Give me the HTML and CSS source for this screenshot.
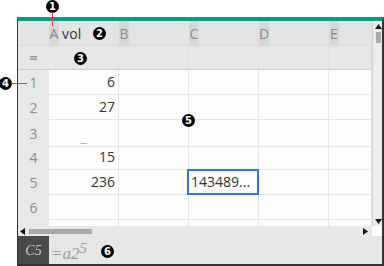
FILE: index.html
```html
<!DOCTYPE html>
<html>
<head>
<meta charset="utf-8">
<link rel="stylesheet" href="styles.css">
</head>
<body>
<div class="page">
  <div class="app">
    <div class="sheet">
      <div class="row head">
        <div class="rh"></div>
        <div class="cell"><span class="letter">A</span><span class="name">vol</span></div>
        <div class="cell"><span class="letter">B</span></div>
        <div class="cell"><span class="letter">C</span></div>
        <div class="cell"><span class="letter">D</span></div>
        <div class="cell"><span class="letter">E</span></div>
      </div>
      <div class="row formula">
        <div class="rh eq">=</div>
        <div class="cell"></div><div class="cell"></div><div class="cell"></div><div class="cell"></div><div class="cell"></div>
      </div>
      <div class="row data">
        <div class="rh">1</div>
        <div class="cell num">6</div><div class="cell"></div><div class="cell"></div><div class="cell"></div><div class="cell"></div>
      </div>
      <div class="row data">
        <div class="rh">2</div>
        <div class="cell num">27</div><div class="cell"></div><div class="cell"></div><div class="cell"></div><div class="cell"></div>
      </div>
      <div class="row data">
        <div class="rh">3</div>
        <div class="cell void">_</div><div class="cell"></div><div class="cell"></div><div class="cell"></div><div class="cell"></div>
      </div>
      <div class="row data">
        <div class="rh">4</div>
        <div class="cell num">15</div><div class="cell"></div><div class="cell"></div><div class="cell"></div><div class="cell"></div>
      </div>
      <div class="row data">
        <div class="rh">5</div>
        <div class="cell num">236</div><div class="cell"></div><div class="cell sel">143489...</div><div class="cell"></div><div class="cell"></div>
      </div>
      <div class="row data">
        <div class="rh">6</div>
        <div class="cell"></div><div class="cell"></div><div class="cell"></div><div class="cell"></div><div class="cell"></div>
      </div>
      <div class="row data">
        <div class="rh"></div>
        <div class="cell"></div><div class="cell"></div><div class="cell"></div><div class="cell"></div><div class="cell"></div>
      </div>
    </div>
    <div class="vscroll">
      <svg class="arr up" width="7" height="5" viewBox="0 0 7 5"><path d="M0 5 L3.5 0 L7 5 Z" fill="#111"/></svg>
      <div class="vthumb"></div>
      <div class="vspace"></div>
      <svg class="arr" width="7" height="5" viewBox="0 0 7 5"><path d="M0 0 L7 0 L3.5 5 Z" fill="#111"/></svg>
    </div>
    <div class="hscroll">
      <svg class="harr" width="5" height="7" viewBox="0 0 5 7"><path d="M5 0 L5 7 L0 3.5 Z" fill="#111"/></svg>
      <div class="hthumb"></div>
      <div class="hspace"></div>
      <svg class="harr" width="5" height="7" viewBox="0 0 5 7"><path d="M0 0 L5 3.5 L0 7 Z" fill="#111"/></svg>
    </div>
    <div class="corner"></div>
    <div class="entry">
      <div class="ref">C5</div>
      <div class="expr">=a2<sup>5</sup></div>
    </div>
  </div>

  <span class="callout c1">1</span>
  <span class="callout c2">2</span>
  <span class="callout c3">3</span>
  <span class="callout c4">4</span>
  <span class="callout c5">5</span>
  <span class="callout c6">6</span>
  <span class="lead l1"></span>
  <span class="lead l4"></span>
</div>
</body>
</html>
```

FILE: styles.css
```css
* { box-sizing: border-box; }
html, body { margin: 0; padding: 0; background: #fff; }
body { font-family: "Open Sans", "Noto Sans", sans-serif; width: 384px; height: 266px; overflow: hidden; }
.page { position: relative; width: 384px; height: 266px; padding: 17px 0 0 17px; }

.app {
  width: 367px;
  height: 249px;
  border-left: 1px solid #333;
  border-right: 2px solid #333;
  border-bottom: 2px solid #333;
  border-top: 4px solid #089b8b;
  display: grid;
  grid-template-columns: 1fr 10px;
  grid-template-rows: 205px 10px 28px;
  background: #e6e6e6;
}

.sheet { overflow: hidden; background: #fdfdfd; }
.row { display: grid; grid-template-columns: 31px 70px 70px 70px 70px 1fr; }
.cell { border-right: 1px solid #e6e6e6; border-bottom: 1px solid #e6e6e6; font-size: 14px; color: #333; }
.rh { display: flex; align-items: center; justify-content: center; color: #8c8c8c; font-size: 14px; background: #e8e8e8; border-bottom: 1px solid #e8e8e8; }

.head { height: 25px; background: #e4e4e4; }
.head .rh, .head .cell { background: #e4e4e4; border-bottom: 1px solid #dadada; border-right-color: #e4e4e4; }
.head .cell { display: flex; align-items: stretch; }
.letter { width: 10px; background: #d7d7d7; color: #8a8a8a; display: flex; align-items: center; justify-content: center; font-size: 14px; }
.name { display: flex; align-items: center; padding-left: 3px; color: #333; font-size: 14px; letter-spacing: 0.2px; }

.formula { height: 24px; }
.formula .rh, .formula .cell { background: #e6e6e6; border-bottom: 1px solid #cbcbcb; border-right-color: #e0e0e0; }
.eq { font-weight: 700; color: #9a9a9a; }

.data { height: 25px; }
.data .rh { border-bottom-color: #e8e8e8; }
.num { display: flex; align-items: center; justify-content: flex-end; padding: 0 3px 2px 0; }
.void { display: flex; align-items: center; justify-content: center; color: #b4b4b4; padding-top: 6px; font-size: 15px; }
.sel { position: relative; display: flex; align-items: center; padding: 0 0 2px 2px; }
.sel::after { content: ""; position: absolute; top: -1px; left: -2px; right: -1px; bottom: -1px; border: 2px solid #2b7bd6; }

.vscroll { background: #ececec; border-left: 1px solid #d0d0d0; display: flex; flex-direction: column; align-items: center; padding: 3px 0 2px 1px; }
.vthumb { width: 5px; height: 11px; background: #a9a9a9; margin-top: 3px; }
.vspace { flex: 1; }

.hscroll { background: #e8e8e8; display: flex; align-items: center; padding: 0 4px 0 2px; }
.harr { flex: none; }
.hthumb { width: 63px; height: 5px; background: #a9a9a9; margin-left: 4px; }
.hspace { flex: 1; }
.corner { background: #fff; }

.entry { grid-column: 1 / -1; display: flex; background: #e6e6e6; }
.ref { width: 31px; background: #4a4a4a; color: #c8c8c8; font-family: "Liberation Serif", serif; font-style: italic; font-size: 14px; display: flex; align-items: center; justify-content: center; padding-top: 1px; }
.expr { font-family: "Liberation Serif", serif; font-style: italic; font-size: 17px; color: #9a9a9a; padding: 9px 0 0 2px; line-height: 18px; }
.expr sup { font-size: 15px; vertical-align: 6px; line-height: 0; }

.callout { position: absolute; width: 13px; height: 13px; border-radius: 50%; background: #000; color: #fff; font-family: "DejaVu Sans", sans-serif; font-weight: 700; font-size: 10px; line-height: 13px; text-align: center; }
.c1 { left: 46px; top: 0px; }
.c2 { left: 93px; top: 27px; }
.c3 { left: 74px; top: 52px; }
.c4 { left: -1px; top: 77px; }
.c5 { left: 182px; top: 114px; }
.c6 { left: 101px; top: 245px; }
.lead { position: absolute; background: #d8404a; }
.l1 { left: 52px; top: 12px; width: 1px; height: 14px; }
.l4 { left: 11px; top: 83px; width: 16px; height: 1px; }
```
